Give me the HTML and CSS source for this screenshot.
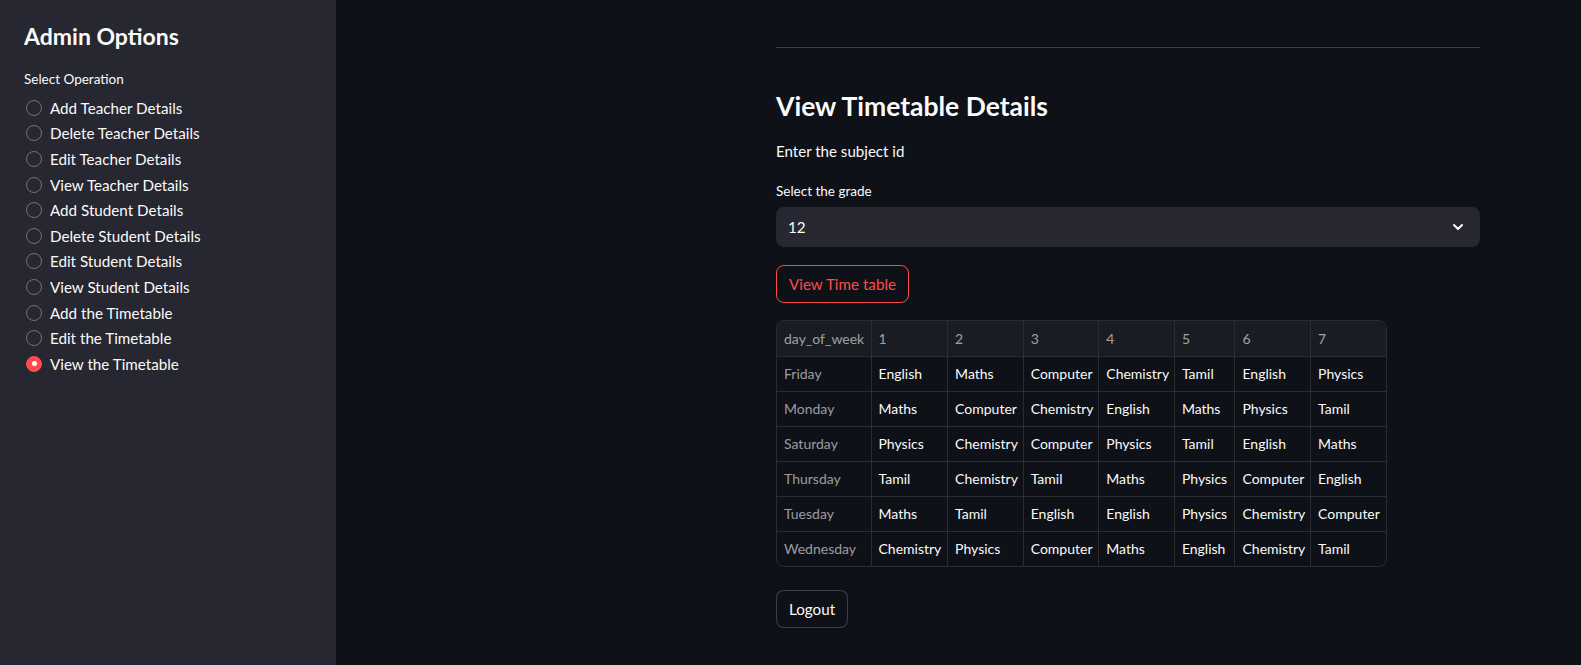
FILE: index.html
```html
<!DOCTYPE html>
<html>
<head>
<meta charset="utf-8">
<link rel="stylesheet" href="styles.css">
</head>
<body>
<div class="app">
  <aside class="sidebar">
    <h2 class="side-title">Admin Options</h2>
    <div class="radio-label">Select Operation</div>
    <div class="radio-group">
      <label class="radio"><span class="dot"></span>Add Teacher Details</label>
      <label class="radio"><span class="dot"></span>Delete Teacher Details</label>
      <label class="radio"><span class="dot"></span>Edit Teacher Details</label>
      <label class="radio"><span class="dot"></span>View Teacher Details</label>
      <label class="radio"><span class="dot"></span>Add Student Details</label>
      <label class="radio"><span class="dot"></span>Delete Student Details</label>
      <label class="radio"><span class="dot"></span>Edit Student Details</label>
      <label class="radio"><span class="dot"></span>View Student Details</label>
      <label class="radio"><span class="dot"></span>Add the Timetable</label>
      <label class="radio"><span class="dot"></span>Edit the Timetable</label>
      <label class="radio selected"><span class="dot"></span>View the Timetable</label>
    </div>
  </aside>
  <main class="main">
    <div class="content">
      <hr class="rule">
      <h1 class="title">View Timetable Details</h1>
      <p class="text">Enter the subject id</p>
      <div class="field-label">Select the grade</div>
      <div class="select">
        <span>12</span>
        <svg width="16" height="16" viewBox="0 0 24 24"><path d="M6 9l6 6 6-6" fill="none" stroke="#fafafa" stroke-width="3" stroke-linecap="round" stroke-linejoin="round"/></svg>
      </div>
      <button class="btn primary">View Time table</button>
      <div class="table-wrap">
        <table class="grid">
          <colgroup>
            <col class="c-idx"><col class="c-1"><col class="c-n"><col class="c-n"><col class="c-n"><col class="c-5"><col class="c-n"><col>
          </colgroup>
          <thead>
            <tr><th>day_of_week</th><th>1</th><th>2</th><th>3</th><th>4</th><th>5</th><th>6</th><th>7</th></tr>
          </thead>
          <tbody>
            <tr><td class="idx">Friday</td><td>English</td><td>Maths</td><td>Computer</td><td>Chemistry</td><td>Tamil</td><td>English</td><td>Physics</td></tr>
            <tr><td class="idx">Monday</td><td>Maths</td><td>Computer</td><td>Chemistry</td><td>English</td><td>Maths</td><td>Physics</td><td>Tamil</td></tr>
            <tr><td class="idx">Saturday</td><td>Physics</td><td>Chemistry</td><td>Computer</td><td>Physics</td><td>Tamil</td><td>English</td><td>Maths</td></tr>
            <tr><td class="idx">Thursday</td><td>Tamil</td><td>Chemistry</td><td>Tamil</td><td>Maths</td><td>Physics</td><td>Computer</td><td>English</td></tr>
            <tr><td class="idx">Tuesday</td><td>Maths</td><td>Tamil</td><td>English</td><td>English</td><td>Physics</td><td>Chemistry</td><td>Computer</td></tr>
            <tr><td class="idx">Wednesday</td><td>Chemistry</td><td>Physics</td><td>Computer</td><td>Maths</td><td>English</td><td>Chemistry</td><td>Tamil</td></tr>
          </tbody>
        </table>
      </div>
      <button class="btn logout">Logout</button>
    </div>
  </main>
</div>
</body>
</html>
```
FILE: styles.css
```css
* { box-sizing: border-box; }
html, body { margin: 0; padding: 0; height: 100%; }
body {
  background: #0e1117;
  color: #fafafa;
  font-family: "Source Sans Pro", Lato, "Noto Sans", sans-serif;
  overflow: hidden;
}
.app { display: flex; height: 665px; }
.sidebar {
  width: 336px;
  flex: none;
  background: #262730;
  padding: 22px 24px;
}
.side-title {
  margin: 0;
  font-size: 23px;
  font-weight: 700;
  line-height: 28px;
}
.radio-label {
  margin-top: 21px;
  font-size: 13.5px;
  line-height: 16px;
}
.radio-group { margin-top: 8px; display: flex; flex-direction: column; }
.radio {
  display: flex;
  align-items: center;
  height: 25.6px;
  font-size: 15.2px;
}
.dot {
  width: 16px; height: 16px;
  border-radius: 50%;
  border: 1px solid rgba(250,250,250,0.35);
  margin: 0 8px 0 2px;
  flex: none;
}
.radio.selected .dot {
  background: #ff4b4b;
  border-color: #ff4b4b;
  position: relative;
}
.radio.selected .dot::after {
  content: "";
  position: absolute;
  left: 4.5px; top: 4.5px;
  width: 5px; height: 5px;
  border-radius: 50%;
  background: #fff;
}
.main { flex: 1; padding-left: 440px; }
.content { width: 704px; padding-top: 47px; }
.rule {
  margin: 0;
  border: none;
  border-top: 1px solid rgba(250,250,250,0.2);
}
.title {
  margin: 40px 0 0;
  font-size: 26.5px;
  font-weight: 700;
  line-height: 36px;
}
.text { margin: 16px 0 0; font-size: 15.1px; line-height: 22px; }
.field-label { margin-top: 20px; font-size: 13.5px; line-height: 18px; }
.select {
  margin-top: 7px;
  height: 40px;
  background: #262730;
  border-radius: 8px;
  display: flex;
  align-items: center;
  justify-content: space-between;
  padding: 0 14px 0 12px;
  font-size: 15.2px;
}
.btn {
  display: block;
  font-family: inherit;
  font-size: 15.2px;
  color: #fafafa;
  background: #0e1117;
  border: 1px solid rgba(250,250,250,0.2);
  border-radius: 8px;
  height: 38px;
  padding: 0 12px;
  margin-top: 18px;
}
.btn.primary { color: #ff4b4b; border-color: #ff4b4b; }
.btn.logout { margin-top: 23px; }
.table-wrap {
  margin-top: 17px;
  width: 611px;
  border: 1px solid rgba(250,250,250,0.12);
  border-radius: 8px;
  overflow: hidden;
}
.grid { border-collapse: collapse; width: 100%; font-size: 14px; table-layout: fixed; }
.c-idx { width: 94px; }
.c-1 { width: 76.6px; }
.c-n { width: 75.6px; }
.c-5 { width: 60.6px; }
.grid th, .grid td {
  height: 35px;
  padding: 0 7px;
  text-align: left;
  white-space: nowrap;
  overflow: hidden;
  border-right: 1px solid rgba(250,250,250,0.12);
  border-bottom: 1px solid rgba(250,250,250,0.12);
}
.grid th:last-child, .grid td:last-child { border-right: none; }
.grid tbody tr:last-child td { border-bottom: none; }
.grid th { background: #1a1c24; color: rgba(250,250,250,0.6); font-weight: 400; }
.grid td.idx { color: rgba(250,250,250,0.6); }
```
